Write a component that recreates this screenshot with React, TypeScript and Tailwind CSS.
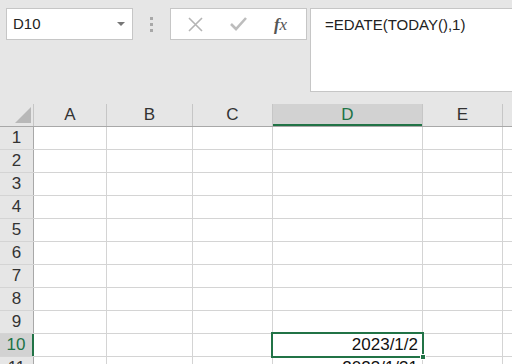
const cols = [
  { key: 'A', w: 'w-[73px]' },
  { key: 'B', w: 'w-[86px]' },
  { key: 'C', w: 'w-[80px]' },
  { key: 'D', w: 'w-[150px]' },
  { key: 'E', w: 'w-[80px]' },
];

const rows = [1, 2, 3, 4, 5, 6, 7, 8, 9, 10, 11];

const App = () => {
  return (
    <div className="w-[512px] h-[364px] overflow-hidden bg-[#e6e6e6] font-['Liberation_Sans','Noto_Sans_CJK_SC',sans-serif] text-[#222]">
      {/* formula bar area */}
      <div className="flex h-[104px] pt-[8px] pl-[6px]">
        <div className="flex items-center justify-between w-[127px] h-[32px] bg-white border border-[#c6c6c6] pl-[6px] pr-[7px]">
          <span className="text-[15px] text-[#222]">D10</span>
          <svg width="8" height="4" viewBox="0 0 8 4">
            <path d="M0 0 L8 0 L4 4 Z" fill="#777" />
          </svg>
        </div>
        <div className="flex flex-col justify-center gap-[3px] w-[37px] h-[32px] items-center">
          <div className="w-[3px] h-[3px] bg-[#a8a8a8]" />
          <div className="w-[3px] h-[3px] bg-[#a8a8a8]" />
          <div className="w-[3px] h-[3px] bg-[#a8a8a8]" />
        </div>
        <div className="flex items-center w-[137px] h-[32px] bg-white border border-[#c6c6c6]">
          <div className="w-[46px] flex justify-center pl-[2px]">
            <svg width="15" height="15" viewBox="0 0 15 15">
              <path d="M1 1 L14 14 M14 1 L1 14" stroke="#b4b4b4" strokeWidth="1.6" />
            </svg>
          </div>
          <div className="w-[42px] flex justify-center">
            <svg width="17" height="14" viewBox="0 0 17 14">
              <path d="M1 7 L6 12 L16 1" stroke="#bdbdbd" strokeWidth="2.6" fill="none" />
            </svg>
          </div>
          <div className="flex-1 flex justify-center pr-[4px]">
            <span className="font-['Liberation_Serif',serif] italic text-[17px] text-[#555] leading-none">
              <span className="font-bold">f</span>x
            </span>
          </div>
        </div>
        <div className="ml-[3px] flex-1 h-[84px] bg-white border border-r-0 border-[#c6c6c6] pl-[14px] pt-[4px]">
          <span className="text-[15px] text-[#222]">=EDATE(TODAY(),1)</span>
        </div>
      </div>

      {/* grid */}
      <div className="relative">
        <div className="flex h-[23px] border-b border-[#a8a8a8]">
          <div className="w-[34px] border-r border-[#c6c6c6] flex items-end justify-end pr-[2px] pb-[3px]">
            <svg width="16" height="16" viewBox="0 0 16 16">
              <path d="M16 0 L16 16 L0 16 Z" fill="#b8b8b8" />
            </svg>
          </div>
          {cols.map((c) => (
            <div
              key={c.key}
              className={`${c.w} flex items-end justify-center text-[17px] leading-[22px] border-r ${
                c.key === 'D'
                  ? 'bg-[#d2d2d2] text-[#217346] border-[#c6c6c6] shadow-[inset_0_-2px_0_#217346]'
                  : 'text-[#333] border-[#c6c6c6]'
              }`}
            >
              {c.key}
            </div>
          ))}
          <div className="flex-1" />
        </div>
        {rows.map((r) => (
          <div key={r} className="flex h-[23px] bg-white border-b border-[#d4d4d4]">
            <div
              className={`w-[34px] flex items-center justify-center text-[17px] border-r ${
                r === 10
                  ? 'bg-[#d2d2d2] text-[#217346] border-[#217346] border-r-2'
                  : 'bg-[#e6e6e6] text-[#333] border-[#a8a8a8]'
              }`}
            >
              {r}
            </div>
            {cols.map((c) => (
              <div
                key={c.key}
                className={`${c.w} border-r border-[#d4d4d4] flex items-center justify-end pr-[4px] text-[17px] text-[#111]`}
              >
                {c.key === 'D' && r === 10 ? '2023/1/2' : c.key === 'D' && r === 11 ? '2023/1/31' : ''}
              </div>
            ))}
            <div className="flex-1" />
          </div>
        ))}
        {/* selection */}
        <div className="absolute left-[271px] top-[228px] w-[153px] h-[26px] border-2 border-[#217346] pointer-events-none" />
        <div className="absolute left-[420px] top-[250px] w-[6px] h-[6px] bg-[#217346] border border-white" />
      </div>
    </div>
  );
};

export default App;
